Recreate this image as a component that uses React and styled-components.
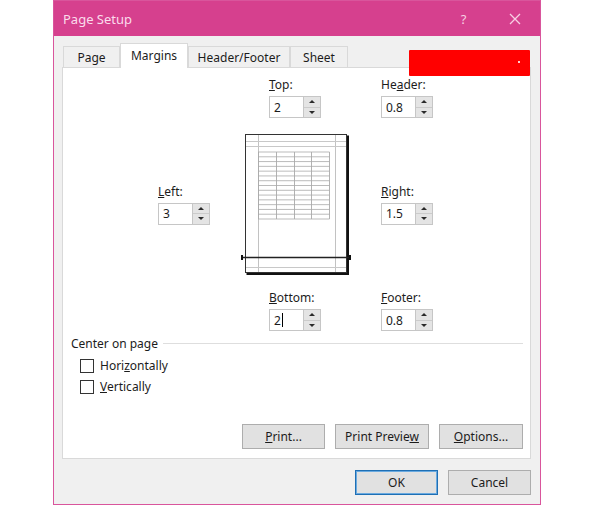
import React from "react";
import styled, { createGlobalStyle } from "styled-components";

const GlobalStyle = createGlobalStyle`
  html, body { margin: 0; padding: 0; background: #fff; }
  body {
    font-family: "Noto Sans", "Open Sans", sans-serif;
    font-size: 12px;
    color: #1c1c1c;
  }
  * { box-sizing: border-box; }
`;

const Screen = styled.div`
  width: 600px;
  height: 511px;
  padding-left: 53px;
  background: #fff;
`;

const Dialog = styled.div`
  position: relative;
  width: 488px;
  height: 505px;
  border: 1px solid #d9559c;
  display: flex;
  flex-direction: column;
  background: #f0f0f0;
`;

const TitleBar = styled.div`
  height: 35px;
  background: #d6408e;
  display: flex;
  align-items: center;
  padding-left: 9px;
  color: #fbdcec;
  font-size: 13px;
`;

const Title = styled.div`
  flex: 1;
`;

const TitleButton = styled.div`
  width: 51px;
  height: 35px;
  display: flex;
  align-items: center;
  justify-content: center;
  color: #f7cfe3;
  font-size: 13px;
`;

const Body = styled.div`
  flex: 1;
  display: flex;
  flex-direction: column;
  padding: 7px 9px 9px 8px;
`;

const TabRow = styled.div`
  display: flex;
  align-items: flex-end;
  height: 24px;
  padding-left: 1px;
`;

const Tab = styled.div`
  position: relative;
  width: ${(p) => p.$w}px;
  height: ${(p) => (p.$active ? 25 : 21)}px;
  margin-bottom: ${(p) => (p.$active ? -1 : 0)}px;
  z-index: ${(p) => (p.$active ? 1 : 0)};
  background: ${(p) => (p.$active ? "#fff" : "#f0f0f0")};
  border: 1px solid #d9d9d9;
  border-bottom: none;
  display: flex;
  align-items: center;
  justify-content: center;
  padding-bottom: ${(p) => (p.$active ? 2 : 0)}px;
`;

const Panel = styled.div`
  flex: 1;
  background: #fff;
  border: 1px solid #d9d9d9;
  display: flex;
  flex-direction: column;
`;

const MarginGrid = styled.div`
  display: grid;
  grid-template-columns: 82px 141px 1fr;
  row-gap: 14px;
  align-items: center;
  margin-top: 9px;
  padding-left: 95px;
`;

const Field = styled.div`
  display: flex;
  flex-direction: column;
  margin-left: ${(p) => p.$indent || 0}px;
`;

const FieldLabel = styled.div`
  line-height: 16px;
  height: 16px;
  margin-bottom: 3px;
`;

const SpinBox = styled.div`
  display: flex;
  width: 52px;
  height: 22px;
  border: 1px solid #c6c6c6;
  background: #fff;
`;

const SpinValue = styled.div`
  flex: 1;
  display: flex;
  align-items: center;
  padding-left: 4px;
  border-right: 1px solid #c6c6c6;
`;

const Caret = styled.span`
  display: inline-block;
  width: 1px;
  height: 14px;
  background: #000;
  margin-left: 1px;
`;

const SpinButtons = styled.div`
  width: 16px;
  display: flex;
  flex-direction: column;
  background: #e4e4e4;
`;

const SpinHalf = styled.div`
  flex: 1;
  display: flex;
  align-items: center;
  justify-content: center;
  & + & {
    border-top: 1px solid #cbcbcb;
  }
  &::after {
    content: "";
    width: 0;
    height: 0;
    border-left: 3px solid transparent;
    border-right: 3px solid transparent;
    ${(p) =>
      p.$up
        ? "border-bottom: 3px solid #2a2a2a;"
        : "border-top: 3px solid #2a2a2a;"}
  }
`;

const Section = styled.div`
  display: flex;
  align-items: center;
  height: 16px;
  margin-top: 4px;
  padding-left: 8px;
  padding-right: 7px;
  gap: 5px;
  &::after {
    content: "";
    flex: 1;
    height: 1px;
    background: #dedede;
  }
`;

const CheckList = styled.div`
  display: flex;
  flex-direction: column;
  margin-top: 4px;
`;

const CheckRow = styled.label`
  display: flex;
  align-items: center;
  height: 21px;
  padding-left: 17px;
  gap: 6px;
`;

const CheckBox = styled.span`
  width: 14px;
  height: 14px;
  border: 1px solid #333;
  background: #fff;
`;

const ButtonRow = styled.div`
  display: flex;
  justify-content: flex-end;
  gap: 10px;
  margin-top: auto;
  padding: 0 ${(p) => p.$right}px ${(p) => p.$bottom}px 0;
`;

const Button = styled.div`
  width: ${(p) => p.$w}px;
  height: 25px;
  display: flex;
  align-items: center;
  justify-content: center;
  background: #e1e1e1;
  border: 1px solid ${(p) => (p.$default ? "#1f6fb4" : "#adadad")};
  box-shadow: ${(p) => (p.$default ? "inset 0 0 0 1px #6aaae0" : "none")};
`;

const Footer = styled.div`
  display: flex;
  justify-content: flex-end;
  gap: 10px;
  margin-top: 11px;
`;

const Redaction = styled.div`
  position: absolute;
  left: 355px;
  top: 49px;
  width: 121px;
  height: 26px;
  background: #ff0000;
  border-radius: 1px;
  &::after {
    content: "";
    position: absolute;
    left: 109px;
    top: 11px;
    width: 2px;
    height: 2px;
    background: #ffd0d0;
  }
`;

function Spinner({ value, caret }) {
  return (
    <SpinBox>
      <SpinValue>
        {value}
        {caret && <Caret />}
      </SpinValue>
      <SpinButtons>
        <SpinHalf $up />
        <SpinHalf />
      </SpinButtons>
    </SpinBox>
  );
}

function MarginField({ label, value, indent, caret }) {
  return (
    <Field $indent={indent}>
      <FieldLabel>{label}</FieldLabel>
      <Spinner value={value} caret={caret} />
    </Field>
  );
}

function PagePreview() {
  const rows = Array.from({ length: 15 }, (_, i) => 20 + (i * 67) / 14);
  const cols = [18, 36, 54, 71, 89];
  return (
    <svg width="112" height="144" viewBox="0 0 112 144">
      <rect x="5.5" y="2.5" width="101" height="138" fill="#fff" stroke="#333" />
      <path d="M108 3.5V142H6.5" stroke="#111" strokeWidth="2" fill="none" />
      <line x1="18.5" y1="3" x2="18.5" y2="140" stroke="#c2c2c2" />
      <line x1="95.5" y1="3" x2="95.5" y2="140" stroke="#c2c2c2" />
      <line x1="6" y1="9.5" x2="106" y2="9.5" stroke="#c8c8c8" />
      <line x1="6" y1="14.5" x2="106" y2="14.5" stroke="#c8c8c8" />
      <line x1="6" y1="135.5" x2="106" y2="135.5" stroke="#c8c8c8" />
      {rows.map((y, i) => (
        <line key={"r" + i} x1="18" y1={y} x2="89.5" y2={y} stroke="#a9a9a9" strokeWidth="0.8" />
      ))}
      {cols.map((x, i) => (
        <line key={"c" + i} x1={x + 0.5} y1="20" x2={x + 0.5} y2="87" stroke="#a9a9a9" strokeWidth="0.9" />
      ))}
      <line x1="2" y1="125.5" x2="110" y2="125.5" stroke="#222" strokeWidth="1.3" />
      <rect x="1" y="123" width="2" height="5" fill="#111" />
      <rect x="109" y="123" width="2" height="5" fill="#111" />
    </svg>
  );
}

function CloseIcon() {
  return (
    <svg width="12" height="12" viewBox="0 0 12 12">
      <path d="M1 1L11 11M11 1L1 11" stroke="#f7cfe3" strokeWidth="1.3" />
    </svg>
  );
}

export default function App() {
  return (
    <Screen>
      <GlobalStyle />
      <Dialog>
        <TitleBar>
          <Title>Page Setup</Title>
          <TitleButton>?</TitleButton>
          <TitleButton>
            <CloseIcon />
          </TitleButton>
        </TitleBar>
        <Body>
          <TabRow>
            <Tab $w={57}>Page</Tab>
            <Tab $w={68} $active>
              Margins
            </Tab>
            <Tab $w={102}>Header/Footer</Tab>
            <Tab $w={58}>Sheet</Tab>
          </TabRow>
          <Panel>
            <MarginGrid>
              <div />
              <MarginField indent={29} label={<><u>T</u>op:</>} value="2" />
              <MarginField label={<>He<u>a</u>der:</>} value="0.8" />

              <MarginField label={<><u>L</u>eft:</>} value="3" />
              <PagePreview />
              <MarginField label={<><u>R</u>ight:</>} value="1.5" />

              <div />
              <MarginField indent={29} label={<><u>B</u>ottom:</>} value="2" caret />
              <MarginField label={<><u>F</u>ooter:</>} value="0.8" />
            </MarginGrid>

            <Section>Center on page</Section>
            <CheckList>
              <CheckRow>
                <CheckBox />
                <span>
                  Hori<u>z</u>ontally
                </span>
              </CheckRow>
              <CheckRow>
                <CheckBox />
                <span>
                  <u>V</u>ertically
                </span>
              </CheckRow>
            </CheckList>

            <ButtonRow $right={7} $bottom={9}>
              <Button $w={83}>
                <span>
                  <u>P</u>rint...
                </span>
              </Button>
              <Button $w={94}>
                <span>
                  Print Previe<u>w</u>
                </span>
              </Button>
              <Button $w={84}>
                <span>
                  <u>O</u>ptions...
                </span>
              </Button>
            </ButtonRow>
          </Panel>
          <Footer>
            <Button $w={83} $default>
              OK
            </Button>
            <Button $w={83}>Cancel</Button>
          </Footer>
        </Body>
        <Redaction />
      </Dialog>
    </Screen>
  );
}
